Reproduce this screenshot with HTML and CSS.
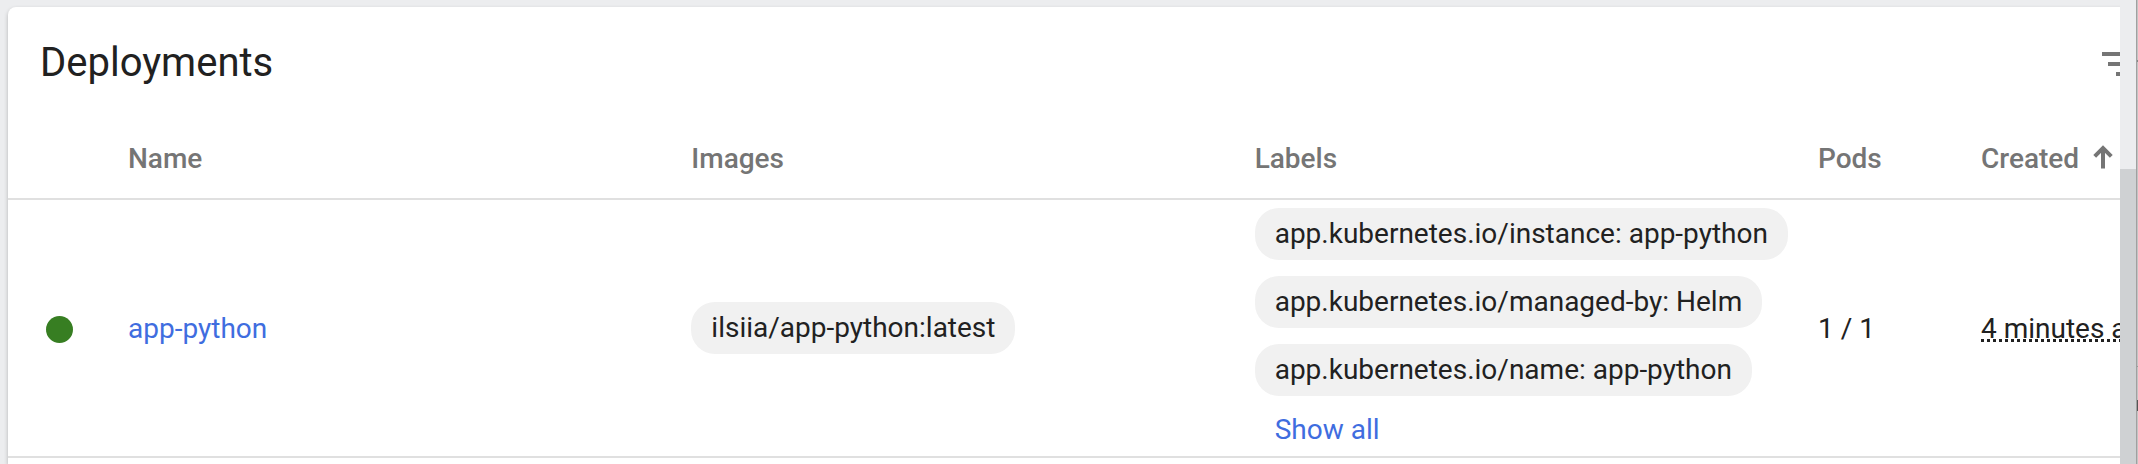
FILE: index.html
```html
<!DOCTYPE html>
<html lang="en">
<head>
<meta charset="utf-8">
<title>Deployments</title>
<link rel="stylesheet" href="styles.css">
</head>
<body>
<div class="app">
  <main class="viewport">
    <section class="card">
      <header class="card-header">
        <h1 class="card-title">Deployments</h1>
        <button class="icon-button" type="button" aria-label="Filter">
          <svg viewBox="0 0 24 24" aria-hidden="true"><path d="M10 18h4v-2h-4v2zM3 6v2h18V6H3zm3 7h12v-2H6v2z"/></svg>
        </button>
      </header>
      <table class="table">
        <colgroup>
          <col class="col-status"><col><col><col><col class="col-pods"><col class="col-created">
        </colgroup>
        <thead>
          <tr>
            <td></td>
            <th scope="col">Name</th>
            <th scope="col">Images</th>
            <th scope="col">Labels</th>
            <th scope="col">Pods</th>
            <th scope="col" aria-sort="ascending">
              <button class="sort-button" type="button">Created
                <svg viewBox="0 0 20 24" aria-hidden="true"><path d="M10 23.500V4M1.700 11.300 10 3l8.300 8.300"/></svg>
              </button>
            </th>
          </tr>
        </thead>
        <tbody>
          <tr>
            <td class="plain"><span class="status" role="img" aria-label="Running"></span></td>
            <td class="plain"><a class="link" href="#app-python">app-python</a></td>
            <td><span class="chip">ilsiia/app-python:latest</span></td>
            <td>
              <div class="chips">
                <span class="chip">app.kubernetes.io/instance: app-python</span>
                <span class="chip">app.kubernetes.io/managed-by: Helm</span>
                <span class="chip">app.kubernetes.io/name: app-python</span>
                <a class="link show-all" href="#labels">Show all</a>
              </div>
            </td>
            <td class="plain">1 / 1</td>
            <td class="plain"><time class="age">4 minutes ago</time></td>
          </tr>
        </tbody>
      </table>
    </section>
  </main>
  <div class="scrollbar"><div class="thumb"></div></div>
  <div class="window-edge"></div>
</div>
</body>
</html>
```
FILE: styles.css
```css
* {
  box-sizing: border-box;
}

body {
  margin: 0;
  background: #ecedef;
  color: #212121;
  font: 28px/36px Roboto, sans-serif;
}

.app {
  display: flex;
  height: 100vh;
  overflow: hidden;
}

.viewport {
  flex: 1;
  min-width: 0;
  overflow: hidden;
  padding: 7px 0 0 8px;
}

.card {
  width: calc(100% + 48px);
  min-height: 100%;
  background: #fff;
  border-radius: 8px 8px 0 0;
  box-shadow: 0 2px 4px rgba(0, 0, 0, 0.24);
}

.card-header {
  display: flex;
  justify-content: space-between;
  align-items: flex-start;
  padding: 33px 24px 32px 32px;
}

.card-title {
  margin: 0;
  font-size: 40px;
  font-weight: 400;
  line-height: 46px;
}

.icon-button,
.sort-button {
  padding: 0;
  border: 0;
  background: none;
  color: inherit;
  font: inherit;
  cursor: pointer;
}

.icon-button svg {
  display: block;
  width: 48px;
  height: 48px;
  fill: #757575;
}

.table {
  width: 100%;
  table-layout: fixed;
  border-collapse: separate;
  border-spacing: 0;
}

.col-status {
  width: 120px;
}

.col-pods {
  width: 163px;
}

.col-created {
  width: 187px;
}

.table th,
.table td {
  padding: 0;
  border-bottom: 2px solid #e0e0e0;
  text-align: left;
  vertical-align: middle;
  white-space: nowrap;
}

.table th {
  height: 80px;
  color: #757575;
  font-weight: 500;
}

.table tbody td {
  height: 258px;
}

.table .plain {
  padding-top: 2px;
}

.sort-button {
  display: flex;
  align-items: center;
  gap: 14px;
}

.sort-button svg {
  width: 20px;
  height: 24px;
  margin-bottom: 4px;
  fill: none;
  stroke: #757575;
  stroke-width: 4;
}

.status {
  display: block;
  width: 27px;
  height: 27px;
  margin-left: 38px;
  border-radius: 50%;
  background: #377e22;
}

.link {
  color: #3f6ddf;
  text-decoration: none;
}

.chips {
  display: flex;
  flex-direction: column;
  align-items: flex-start;
  gap: 16px;
}

.chip {
  display: inline-block;
  padding: 8px 20px;
  border-radius: 24px;
  background: #f1f1f1;
}

.show-all {
  padding: 0 20px;
}

.age {
  padding-bottom: 1px;
  background: repeating-linear-gradient(90deg, #212121 0 3px, transparent 3px 6px) 0 27px / 100% 3px no-repeat;
}

.scrollbar {
  flex: 0 0 16px;
  padding-top: 169px;
  background: #ecedef;
}

.thumb {
  height: 100%;
  background: #cfd1d3;
}

.window-edge {
  flex: 0 0 2px;
  border-left: 1px solid #a0a0a0;
  background: linear-gradient(#c4c4c4 60px, #888 60px 62px, #c4c4c4 62px 366px, #999 366px 367px, #c4c4c4 367px 400px, #555 400px 411px, #c4c4c4 411px);
}
```
